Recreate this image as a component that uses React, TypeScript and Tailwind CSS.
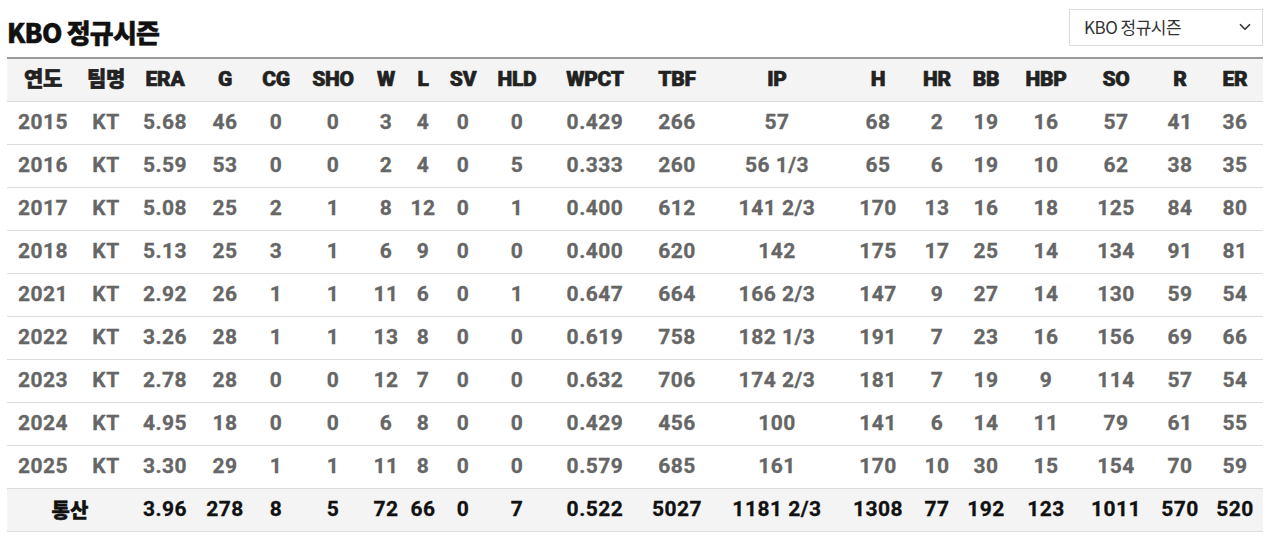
import React from 'react';
import { ChevronDown } from 'lucide-react';

const columns = [
  { key: 'year', label: '연도', w: 72 },
  { key: 'team', label: '팀명', w: 54 },
  { key: 'era', label: 'ERA', w: 64 },
  { key: 'g', label: 'G', w: 56 },
  { key: 'cg', label: 'CG', w: 46 },
  { key: 'sho', label: 'SHO', w: 68 },
  { key: 'w', label: 'W', w: 38 },
  { key: 'l', label: 'L', w: 36 },
  { key: 'sv', label: 'SV', w: 44 },
  { key: 'hld', label: 'HLD', w: 64 },
  { key: 'wpct', label: 'WPCT', w: 92 },
  { key: 'tbf', label: 'TBF', w: 72 },
  { key: 'ip', label: 'IP', w: 128 },
  { key: 'h', label: 'H', w: 74 },
  { key: 'hr', label: 'HR', w: 44 },
  { key: 'bb', label: 'BB', w: 54 },
  { key: 'hbp', label: 'HBP', w: 66 },
  { key: 'so', label: 'SO', w: 74 },
  { key: 'r', label: 'R', w: 54 },
  { key: 'er', label: 'ER', w: 56 },
];

const seasons: string[][] = [
  ['2015', 'KT', '5.68', '46', '0', '0', '3', '4', '0', '0', '0.429', '266', '57', '68', '2', '19', '16', '57', '41', '36'],
  ['2016', 'KT', '5.59', '53', '0', '0', '2', '4', '0', '5', '0.333', '260', '56 1/3', '65', '6', '19', '10', '62', '38', '35'],
  ['2017', 'KT', '5.08', '25', '2', '1', '8', '12', '0', '1', '0.400', '612', '141 2/3', '170', '13', '16', '18', '125', '84', '80'],
  ['2018', 'KT', '5.13', '25', '3', '1', '6', '9', '0', '0', '0.400', '620', '142', '175', '17', '25', '14', '134', '91', '81'],
  ['2021', 'KT', '2.92', '26', '1', '1', '11', '6', '0', '1', '0.647', '664', '166 2/3', '147', '9', '27', '14', '130', '59', '54'],
  ['2022', 'KT', '3.26', '28', '1', '1', '13', '8', '0', '0', '0.619', '758', '182 1/3', '191', '7', '23', '16', '156', '69', '66'],
  ['2023', 'KT', '2.78', '28', '0', '0', '12', '7', '0', '0', '0.632', '706', '174 2/3', '181', '7', '19', '9', '114', '57', '54'],
  ['2024', 'KT', '4.95', '18', '0', '0', '6', '8', '0', '0', '0.429', '456', '100', '141', '6', '14', '11', '79', '61', '55'],
  ['2025', 'KT', '3.30', '29', '1', '1', '11', '8', '0', '0', '0.579', '685', '161', '170', '10', '30', '15', '154', '70', '59'],
];

const totals = ['3.96', '278', '8', '5', '72', '66', '0', '7', '0.522', '5027', '1181 2/3', '1308', '77', '192', '123', '1011', '570', '520'];

const font = { fontFamily: 'Roboto, "Noto Sans CJK KR", sans-serif' };
const krFont = { fontFamily: '"Noto Sans CJK KR", sans-serif' };

export default function App() {
  return (
    <div className="w-[1267px] h-[543px] bg-white pl-[7px] pr-[4px]" style={font}>
      {/* Title + league select */}
      <div className="flex items-center justify-between h-[57px]">
        <h2 className="text-[26px] font-black text-[#111] tracking-[-0.8px] pt-[6px] [-webkit-text-stroke:0.5px_#111]" style={krFont}>
          KBO 정규시즌
        </h2>
        <div className="flex items-center justify-between w-[194px] h-[37px] mb-[3px] border border-[#dcdcdc] pl-[14px] pr-[8px] text-[17px] text-[#333] tracking-[-0.5px]" style={krFont}>
          <span>KBO 정규시즌</span>
          <ChevronDown className="w-[18px] h-[18px] text-[#333]" strokeWidth={2.2} />
        </div>
      </div>

      {/* Stats table */}
      <table className="table-fixed border-collapse w-[1256px]">
        <colgroup>
          {columns.map(c => (
            <col key={c.key} style={{ width: c.w }} />
          ))}
        </colgroup>
        <thead>
          <tr className="bg-[#f4f4f4] border-t-2 border-[#999] border-b border-b-[#dcdcdc] h-[43px]">
            {columns.map(c => (
              <th key={c.key} className="text-center text-[21px] font-black text-[#222] tracking-[-0.3px] p-0 [-webkit-text-stroke:0.6px_#222]">
                {c.label}
              </th>
            ))}
          </tr>
        </thead>
        <tbody>
          {seasons.map(row => (
            <tr key={row[0]} className="border-b border-[#dcdcdc] h-[43px]">
              {row.map((v, i) => (
                <td key={i} className="text-center text-[21px] font-bold text-[#666] tracking-[0.5px] p-0 whitespace-nowrap [-webkit-text-stroke:0.3px_#666]">
                  {v}
                </td>
              ))}
            </tr>
          ))}
          <tr className="bg-[#f4f4f4] border-b border-[#dcdcdc] h-[43px]">
            <td colSpan={2} className="text-center text-[20px] font-black text-[#111] p-0 [-webkit-text-stroke:0.4px_#111]" style={krFont}>통산</td>
            {totals.map((v, i) => (
              <td key={i} className="text-center text-[21px] font-bold text-[#111] tracking-[0.5px] p-0 whitespace-nowrap [-webkit-text-stroke:0.3px_#111]">
                {v}
              </td>
            ))}
          </tr>
        </tbody>
      </table>
    </div>
  );
}
